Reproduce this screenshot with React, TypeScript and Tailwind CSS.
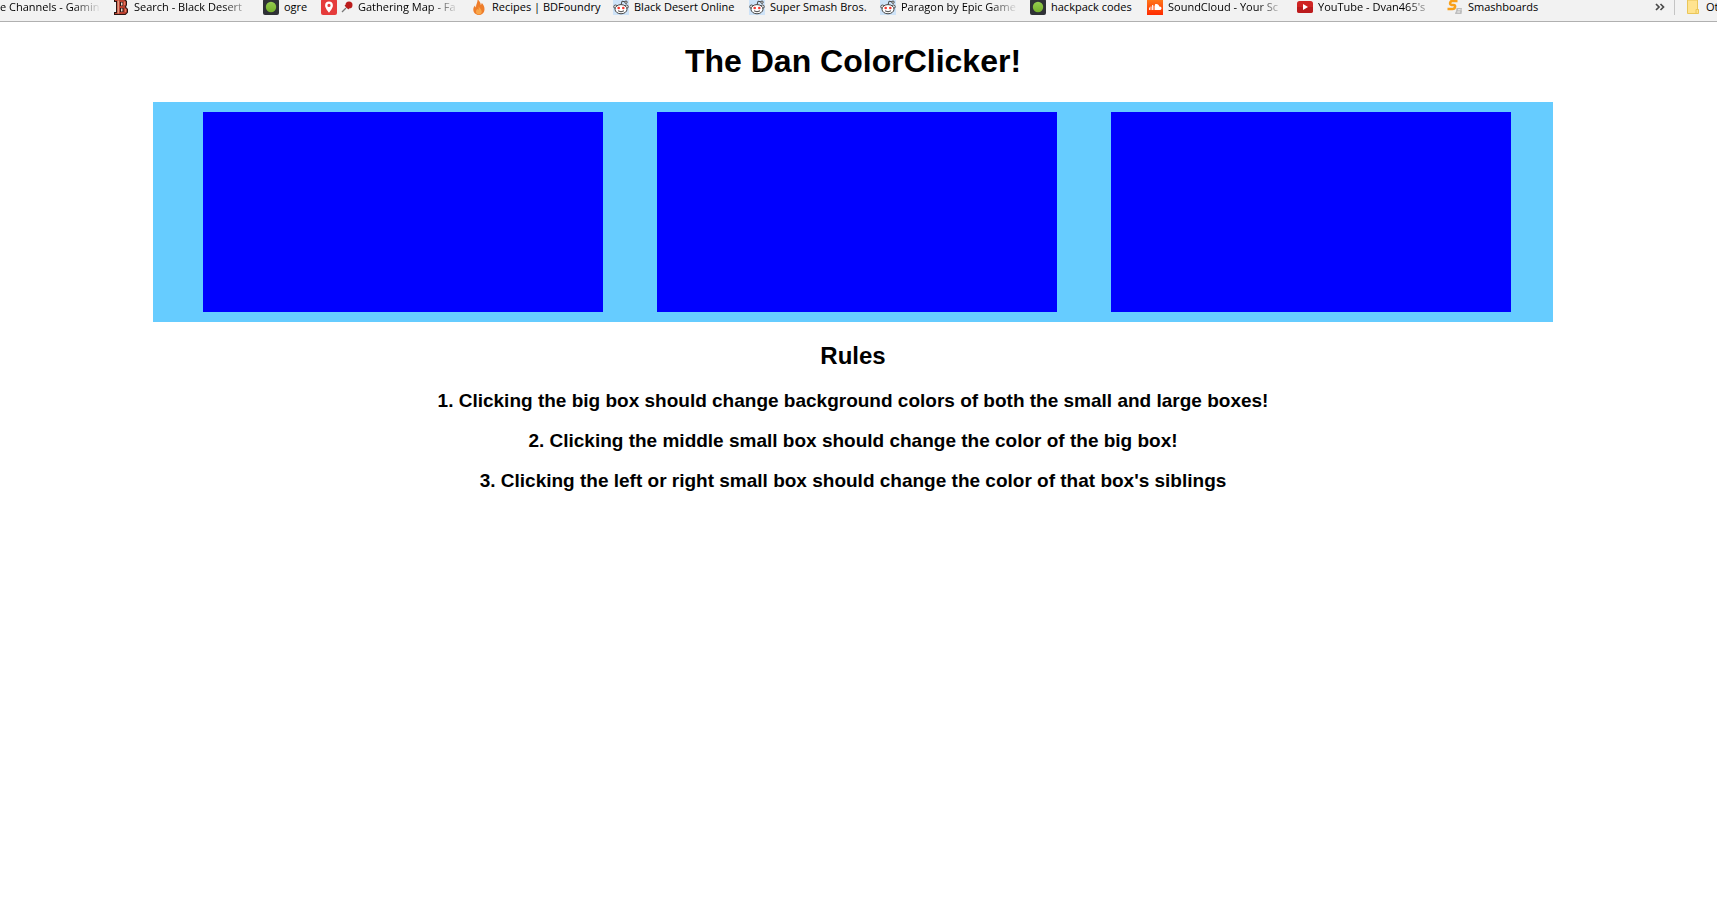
import { useState, type ReactNode } from "react";

function LetterBIcon() {
  return (
    <svg viewBox="0 0 16 16" className="size-4 shrink-0" aria-hidden="true">
      <path d="M1 0h10.500L14 2v4l-1 2 2 2v3.500L12.500 16H1v-3h2V3H1z" fill="#2a1512" />
      <path d="M2 .8h9L13 2.700v3L11.800 8 14 10.300v3L12 15H2v-1h2V2H2z" fill="#b8402f" />
      <path d="M4.500 1.500h1.600v13H4.500z" fill="#e59a80" />
      <path d="M7 3h3v4H7zM7 9h3.500v4H7z" fill="#2a1512" />
      <path d="M8 3.500h1.500v3H8zM8 9.500h1.500v3H8z" fill="#f0d5c8" />
      <path d="M11 2.500h1.200V6H11zM11.800 10H13v3h-1.200z" fill="#e27860" />
    </svg>
  );
}

function GreenDotIcon() {
  return (
    <svg viewBox="0 0 16 16" className="size-4 shrink-0" aria-hidden="true">
      <defs>
        <linearGradient id="green-dot" x1="0" y1="0" x2="0" y2="1">
          <stop offset="0" stopColor="#96cc50" />
          <stop offset="1" stopColor="#74b02a" />
        </linearGradient>
      </defs>
      <rect width="16" height="16" rx="2" fill="#2f3136" />
      <circle cx="8" cy="8" r="5.200" fill="url(#green-dot)" />
    </svg>
  );
}

function MapMarkerIcon() {
  return (
    <svg viewBox="0 0 16 16" className="size-4 shrink-0" aria-hidden="true">
      <rect width="16" height="16" rx="2" fill="#e53b3b" />
      <path
        fillRule="evenodd"
        d="M8 2.500a3.900 3.900 0 0 0-3.900 3.900C4.100 9.300 8 13.500 8 13.500s3.900-4.200 3.900-7.100A3.900 3.900 0 0 0 8 2.500m0 2.300a1.600 1.600 0 1 1 0 3.200 1.600 1.600 0 0 1 0-3.200"
        fill="#fff"
      />
    </svg>
  );
}

function PushpinIcon() {
  return (
    <svg viewBox="0 0 12 12" className="size-3 shrink-0" aria-hidden="true">
      <path d="M1 11l4-4" stroke="#777" strokeWidth="1.200" />
      <path d="M3.500 4.500l4 4 .9-2.300-2.600-2.600z" fill="#9c1414" />
      <circle cx="8" cy="4" r="3.500" fill="#bb1c1c" />
    </svg>
  );
}

function FlameIcon() {
  return (
    <svg viewBox="0 0 16 16" className="size-4 shrink-0" aria-hidden="true">
      <path
        d="M6.500 0c1.500 2 3.300 3.300 3.200 6 .8-.5 1-1.300 1-2.200 1.800 2 2.800 4 2.800 6.200 0 3.500-2.300 6-5.500 6S2.300 13.700 2.300 10.500c0-1.700.8-3 1.800-4 0 1 .3 1.500.9 2C4.800 5 7 3.500 6.500 0"
        fill="#ee7d2b"
      />
      <path
        d="M7.500 7.500c1.400 1.600 3.200 3 3.200 5.300 0 1.700-1.200 2.700-2.800 2.700s-2.900-1-2.900-2.800c0-1.400.8-2 1.300-2.900.3.700.7 1 1.100 1.100.4-1 .4-2 .1-3.400"
        fill="#f9a64a"
      />
    </svg>
  );
}

function RedditIcon() {
  return (
    <svg viewBox="0 0 16 16" className="size-4 shrink-0" aria-hidden="true">
      <rect width="16" height="16" fill="#cee3f8" />
      <path d="M8 6l1-3.800 3.200.7" fill="none" stroke="#444" strokeWidth="1" />
      <g fill="#fff" stroke="#444" strokeWidth="1">
        <circle cx="13" cy="3.200" r="1.200" />
        <circle cx="2.500" cy="7.700" r="1.700" />
        <circle cx="13.500" cy="7.700" r="1.700" />
        <ellipse cx="8" cy="10.200" rx="6" ry="4.600" />
      </g>
      <circle cx="5.700" cy="9" r="1.300" fill="#f33a32" />
      <circle cx="10.300" cy="9" r="1.300" fill="#f33a32" />
      <path d="M5 11.800q3 2 6 0" fill="none" stroke="#444" strokeWidth="1" />
    </svg>
  );
}

function SoundCloudIcon() {
  return (
    <svg viewBox="0 0 16 16" className="size-4 shrink-0" aria-hidden="true">
      <defs>
        <linearGradient id="cloud-orange" x1="0" y1="0" x2="0" y2="1">
          <stop offset="0" stopColor="#ff7a1a" />
          <stop offset="1" stopColor="#ff2a00" />
        </linearGradient>
      </defs>
      <rect width="16" height="16" fill="url(#cloud-orange)" />
      <path d="M2.500 8.500v2.500M4 7.500V11M5.500 6v5M7 6.500V11" stroke="#fff" strokeWidth=".9" />
      <path d="M8 5.300c2.300-1 4 .4 4.200 2.200 1.300-.3 2.300.5 2.300 1.700S13.700 11 12.800 11H8z" fill="#fff" />
    </svg>
  );
}

function YouTubeIcon() {
  return (
    <svg viewBox="0 0 16 16" className="size-4 shrink-0" aria-hidden="true">
      <rect y="2" width="16" height="12" rx="2.500" fill="#cf2423" />
      <path d="M0 8h16v3.500a2.500 2.500 0 0 1-2.500 2.500h-11A2.500 2.500 0 0 1 0 11.500z" fill="#bb1b1d" />
      <path d="M6 5l5 3-5 3z" fill="#fff" />
    </svg>
  );
}

function SmashboardsIcon() {
  return (
    <svg viewBox="0 0 16 16" className="size-4 shrink-0" aria-hidden="true">
      <path
        d="M10.500 2H5.200Q3.600 2 3.200 3.800T4.800 6H6.600Q8.400 6 8 8T5.600 10H.5"
        fill="none"
        stroke="#f9a11b"
        strokeWidth="2.600"
      />
      <path d="M9.500 9H15l-.4 2 .4 1-.5 3H8l.5-2 .5-.5z" fill="#bdbdbd" />
      <path d="M11 10.300h2.500v.9H11zM10.300 12.600h2.700v.9h-2.700z" fill="#f4f4f4" />
    </svg>
  );
}

function FolderIcon() {
  return (
    <svg viewBox="0 0 12 16" className="h-4 w-3 shrink-0" aria-hidden="true">
      <path d="M.5 1h10v9.500h1v4H.5z" fill="#ffe38f" stroke="#eac659" />
      <path d="M9 14.500v-4h2.500" fill="none" stroke="#eac659" />
    </svg>
  );
}

type Bookmark = { label: string; icon?: ReactNode; width: string; faded?: boolean };

const bookmarks: Bookmark[] = [
  { label: "e Channels - Gamin", width: "w-[113px]", faded: true },
  { label: "Search - Black Desert", icon: <LetterBIcon />, width: "w-[150px]", faded: true },
  { label: "ogre", icon: <GreenDotIcon />, width: "w-[58px]" },
  {
    label: "Gathering Map - Fa",
    icon: (
      <span className="flex items-center gap-1">
        <MapMarkerIcon />
        <PushpinIcon />
      </span>
    ),
    width: "w-[150px]",
    faded: true,
  },
  { label: "Recipes | BDFoundry", icon: <FlameIcon />, width: "w-[142px]" },
  { label: "Black Desert Online", icon: <RedditIcon />, width: "w-[136px]" },
  { label: "Super Smash Bros.", icon: <RedditIcon />, width: "w-[131px]" },
  { label: "Paragon by Epic Game", icon: <RedditIcon />, width: "w-[150px]", faded: true },
  { label: "hackpack codes", icon: <GreenDotIcon />, width: "w-[117px]" },
  { label: "SoundCloud - Your Sc", icon: <SoundCloudIcon />, width: "w-[150px]", faded: true },
  { label: "YouTube - Dvan465's", icon: <YouTubeIcon />, width: "w-[150px]", faded: true },
  { label: "Smashboards", icon: <SmashboardsIcon />, width: "w-[100px]" },
];

function BookmarksBar() {
  return (
    <nav
      aria-label="Bookmarks"
      className="flex h-[22px] items-start overflow-hidden border-b border-[#b0b0b0] bg-[#f2f2f2] font-['Open_Sans','Noto_Sans',sans-serif] text-[11px] leading-[14px] whitespace-nowrap text-black"
    >
      {bookmarks.map(({ label, icon, width, faded }) => (
        <a key={label} href="#" className={`flex h-[14px] shrink-0 items-center gap-[5px] pr-3 ${width}`}>
          {icon}
          <span
            className={
              faded
                ? "min-w-0 flex-1 overflow-hidden [mask-image:linear-gradient(to_left,transparent,black_28px)]"
                : ""
            }
          >
            {label}
          </span>
        </a>
      ))}
      <div className="ml-auto flex h-[14px] shrink-0 items-center">
        <button type="button" aria-label="More bookmarks" className="mr-2 flex h-[14px] w-3 items-center justify-center">
          <svg viewBox="0 0 10 8" className="h-2 w-[10px]" aria-hidden="true">
            <path d="M1 1l3 3-3 3M5.500 1l3 3-3 3" fill="none" stroke="#4a4a4a" strokeWidth="1.700" />
          </svg>
        </button>
        <span className="mr-3 h-4 w-px bg-[#c4c4c4]" />
        <a href="#" className="flex items-center gap-[7px]">
          <FolderIcon />
          <span className="w-[11px] overflow-hidden">Ot</span>
        </a>
      </div>
    </nav>
  );
}

const bigColors = ["bg-[#66ccff]", "bg-[#ffcc66]", "bg-[#99dd99]"];
const smallColors = ["bg-[#0000ff]", "bg-[#ff0000]", "bg-[#008000]"];
const boxNames = ["Left box", "Middle box", "Right box"];

const rules = [
  "1. Clicking the big box should change background colors of both the small and large boxes!",
  "2. Clicking the middle small box should change the color of the big box!",
  "3. Clicking the left or right small box should change the color of that box's siblings",
];

export default function App() {
  const [big, setBig] = useState(0);
  const [small, setSmall] = useState([0, 0, 0]);

  const changeBig = () => setBig((c) => (c + 1) % bigColors.length);
  const changeSmall = (skip: number) =>
    setSmall((colors) => colors.map((c, i) => (i === skip ? c : (c + 1) % smallColors.length)));

  return (
    <div className="min-h-screen bg-white text-black">
      <BookmarksBar />
      <main className="flex flex-col items-center pr-[11px] text-center font-['Liberation_Sans',Arial,sans-serif] font-bold">
        <h1 className="mt-[21px] text-[32px] leading-[37px]">The Dan ColorClicker!</h1>
        <div
          onClick={() => {
            changeBig();
            changeSmall(-1);
          }}
          className={`mt-[22px] flex w-full max-w-[1400px] gap-[54px] py-[10px] pr-[42px] pl-[50px] ${bigColors[big]}`}
        >
          {small.map((color, i) => (
            <button
              key={boxNames[i]}
              type="button"
              aria-label={boxNames[i]}
              onClick={(event) => {
                event.stopPropagation();
                if (i === 1) changeBig();
                else changeSmall(i);
              }}
              className={`h-[200px] flex-1 ${smallColors[color]}`}
            />
          ))}
        </div>
        <h2 className="mt-5 text-[24px] leading-[28px]">Rules</h2>
        <div className="mt-5 flex flex-col gap-[19px] text-[19px] leading-[21px]">
          {rules.map((rule) => (
            <h3 key={rule}>{rule}</h3>
          ))}
        </div>
      </main>
    </div>
  );
}
